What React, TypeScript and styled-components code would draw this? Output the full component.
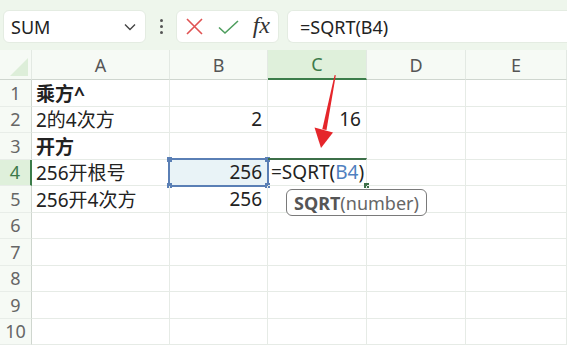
import React from 'react';
import styled, { createGlobalStyle } from 'styled-components';

const GlobalStyle = createGlobalStyle`
  html, body {
    margin: 0;
    padding: 0;
    background: #ffffff;
    overflow: hidden;
  }
  body {
    font-family: "Noto Sans", "Noto Sans CJK SC", sans-serif;
  }
`;

const Page = styled.div`
  width: 567px;
  height: 345px;
  display: flex;
  flex-direction: column;
  position: relative;
  overflow: hidden;
  background: #ffffff;
`;

const Toolbar = styled.div`
  height: 50px;
  flex: none;
  display: flex;
  align-items: flex-start;
  padding: 10px 0 0 3px;
  box-sizing: border-box;
  background: #eef6ec;
`;

const Box = styled.div<{ $w?: number }>`
  height: 33px;
  box-sizing: border-box;
  background: #ffffff;
  border-radius: 6px;
  border: 1px solid #e4ece2;
  display: flex;
  align-items: center;
  ${p => (p.$w ? `width: ${p.$w}px;` : 'flex: 1;')}
`;

const NameBox = styled(Box)`
  justify-content: space-between;
  padding: 0 9px 0 7px;
  font-size: 18px;
  color: #222;
`;

const Dots = styled.div`
  width: 30px;
  height: 33px;
  display: flex;
  flex-direction: column;
  align-items: center;
  justify-content: center;
  gap: 3px;
  span {
    width: 3px;
    height: 3px;
    border-radius: 50%;
    background: #555;
  }
`;

const ActionBox = styled(Box)`
  justify-content: space-between;
  padding: 0 8px 0 8px;
`;

const Fx = styled.span`
  font-family: "Liberation Serif", "DejaVu Serif", serif;
  font-style: italic;
  font-size: 24px;
  color: #333;
  line-height: 1;
  margin-top: -3px;
`;

const FormulaBox = styled(Box)`
  margin-left: 8px;
  border-right: none;
  border-radius: 6px 0 0 6px;
  padding-left: 12px;
  font-size: 18px;
  color: #222;
`;

const Sheet = styled.div`
  display: grid;
  grid-template-columns: 32px 138px 98px 99px 99px 101px;
  grid-template-rows: 30px repeat(10, 26.5px);
  font-size: 19px;
  color: #222;
  position: relative;
`;

const Corner = styled.div`
  background: #f6faf5;
  border-bottom: 1px solid #cfd6cf;
  border-right: 1px solid #e3e9e3;
  position: relative;
  &::after {
    content: "";
    position: absolute;
    right: 3px;
    bottom: 3px;
    border-left: 18px solid transparent;
    border-bottom: 18px solid #ddeed9;
  }
`;

const ColHead = styled.div<{ $active?: boolean }>`
  display: flex;
  align-items: center;
  justify-content: center;
  font-size: 18px;
  color: ${p => (p.$active ? '#3d7a4a' : '#555')};
  background: ${p => (p.$active ? '#dff0db' : '#f6faf5')};
  border-right: 1px solid #e3e9e3;
  border-bottom: ${p => (p.$active ? '2px solid #3c7d4a' : '1px solid #cfd6cf')};
  box-sizing: border-box;
`;

const RowHead = styled.div<{ $active?: boolean }>`
  display: flex;
  align-items: center;
  justify-content: center;
  font-size: 18px;
  color: ${p => (p.$active ? '#3d7a4a' : '#666')};
  background: ${p => (p.$active ? '#dff0db' : '#f6faf5')};
  border-right: ${p => (p.$active ? '2px solid #3c7d4a' : '1px solid #cfd6cf')};
  border-bottom: 1px solid #e8ede8;
  box-sizing: border-box;
`;

const Cell = styled.div<{ $align?: 'left' | 'right'; $bold?: boolean }>`
  display: flex;
  align-items: center;
  justify-content: ${p => (p.$align === 'right' ? 'flex-end' : 'flex-start')};
  padding: 0 5px 0 4px;
  font-weight: ${p => (p.$bold ? 700 : 400)};
  border-right: 1px solid #e6ebe6;
  border-bottom: 1px solid #e6ebe6;
  box-sizing: border-box;
  white-space: nowrap;
  position: relative;
`;

const RefCell = styled(Cell)`
  background: #e9f3f7;
  border: 2px solid #5a7fb5;
  margin: -2px -1px -1px -2px;
`;

const Handle = styled.i<{ $pos: 'tl' | 'tr' | 'bl' | 'br'; $color?: string }>`
  position: absolute;
  width: 5px;
  height: 5px;
  background: ${p => p.$color || '#5a7fb5'};
  ${p => (p.$pos[0] === 't' ? 'top: -3px;' : 'bottom: -3px;')}
  ${p => (p.$pos[1] === 'l' ? 'left: -3px;' : 'right: -3px;')}
`;

const EditCell = styled(Cell)`
  border-top: 2px solid #3c6f48;
  margin-top: -2px;
  padding-left: 3px;
  overflow: visible;
`;

const RefText = styled.span`
  color: #4f7fc0;
`;

const Caret = styled.span`
  display: inline-block;
  width: 1px;
  height: 24px;
  background: #222;
  vertical-align: middle;
`;

const Tip = styled.div`
  position: absolute;
  left: 286px;
  top: 139px;
  height: 27px;
  box-sizing: border-box;
  padding: 0 7px;
  display: flex;
  align-items: center;
  background: #ffffff;
  border: 1.5px solid #7a7a7a;
  border-radius: 6px;
  font-size: 18px;
  color: #666;
  b {
    color: #555;
  }
`;

const Arrow = styled.svg`
  position: absolute;
  left: 300px;
  top: 60px;
  pointer-events: none;
`;

const cols = ['A', 'B', 'C', 'D', 'E'];

type Row = { a?: string; b?: string; c?: string; bold?: boolean };
const rows: Row[] = [
  { a: '乘方^', bold: true },
  { a: '2的4次方', b: '2', c: '16' },
  { a: '开方', bold: true },
  { a: '256开根号', b: '256' },
  { a: '256开4次方', b: '256' },
  {}, {}, {}, {}, {},
];

export default function App() {
  return (
    <Page>
      <GlobalStyle />
      <Toolbar>
        <NameBox $w={143}>
          <span>SUM</span>
          <svg width="12" height="8" viewBox="0 0 12 8">
            <path d="M1 1.5 L6 6.5 L11 1.5" fill="none" stroke="#444" strokeWidth="1.4" />
          </svg>
        </NameBox>
        <Dots><span /><span /><span /></Dots>
        <ActionBox $w={103}>
          <svg width="19" height="19" viewBox="0 0 19 19">
            <path d="M2 2 L17 17 M17 2 L2 17" stroke="#e05252" strokeWidth="1.6" fill="none" />
          </svg>
          <svg width="23" height="18" viewBox="0 0 23 18">
            <path d="M2 9.5 L8 15 L21 3" stroke="#4e9e5e" strokeWidth="1.6" fill="none" />
          </svg>
          <Fx>fx</Fx>
        </ActionBox>
        <FormulaBox>=SQRT(B4)</FormulaBox>
      </Toolbar>
      <Sheet>
        <Corner />
        {cols.map(c => (
          <ColHead key={c} $active={c === 'C'}>{c}</ColHead>
        ))}
        {rows.map((r, i) => {
          const n = i + 1;
          return (
            <React.Fragment key={n}>
              <RowHead $active={n === 4}>{n}</RowHead>
              <Cell $bold={r.bold}>{r.a}</Cell>
              {n === 4 ? (
                <RefCell $align="right">
                  {r.b}
                  <Handle $pos="tl" />
                  <Handle $pos="tr" />
                  <Handle $pos="bl" />
                  <Handle $pos="br" />
                </RefCell>
              ) : (
                <Cell $align="right">{r.b}</Cell>
              )}
              {n === 4 ? (
                <EditCell>
                  =SQRT<Caret />(<RefText>B4</RefText>)
                  <Handle $pos="br" $color="#3c6f48" />
                </EditCell>
              ) : (
                <Cell $align="right">{r.c}</Cell>
              )}
              <Cell />
              <Cell />
            </React.Fragment>
          );
        })}
        <Tip>
          <b>SQRT</b>(number)
        </Tip>
      </Sheet>
      <Arrow width="50" height="100" viewBox="0 0 50 100">
        <path d="M34.6 15 L35.8 15.3 L26.5 70 L22.3 69.2 Z" fill="#e5262b" />
        <path d="M14.5 67.5 L33 72.5 L21 88 Z" fill="#e5262b" />
      </Arrow>
    </Page>
  );
}
